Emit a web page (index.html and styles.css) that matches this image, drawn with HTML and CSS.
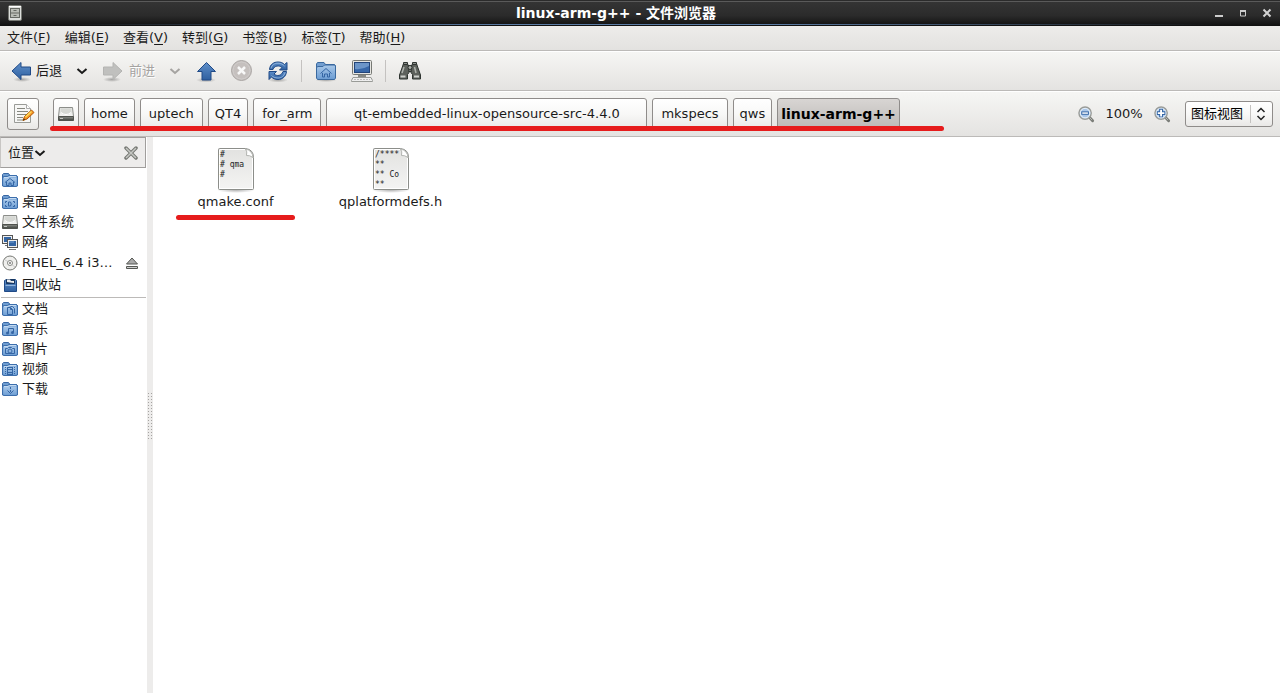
FILE: index.html
```html
<!DOCTYPE html>
<html lang="zh-CN">
<head>
<meta charset="utf-8">
<title>linux-arm-g++ - 文件浏览器</title>
<link rel="stylesheet" href="styles.css">
</head>
<body>
<svg class="defs" aria-hidden="true">
  <defs>
    <linearGradient id="blue" x1="0" y1="0" x2="0" y2="1"><stop offset="0" stop-color="#5f8fc9"/><stop offset="1" stop-color="#2f60a0"/></linearGradient>
    <linearGradient id="fold" x1="0" y1="0" x2="0" y2="1"><stop offset="0" stop-color="#a9c8e9"/><stop offset="1" stop-color="#6b9cd3"/></linearGradient>
    <linearGradient id="page" x1="0" y1="0" x2="0" y2="1"><stop offset="0" stop-color="#e2e2e0"/><stop offset="1" stop-color="#f4f4f3"/></linearGradient>
    <linearGradient id="metal" x1="0" y1="0" x2="0" y2="1"><stop offset="0" stop-color="#e0e1de"/><stop offset="1" stop-color="#f4f4f2"/></linearGradient>
    <linearGradient id="base" x1="0" y1="0" x2="0" y2="1"><stop offset="0" stop-color="#8d908b"/><stop offset="1" stop-color="#3d413c"/></linearGradient>
    <radialGradient id="shade"><stop offset="0" stop-color="#000" stop-opacity=".3"/><stop offset="1" stop-color="#000" stop-opacity="0"/></radialGradient>
    <symbol id="folder" viewBox="0 0 16 16">
      <path d="M.5 14V2.500l1-1h5l1.500 2h6.500l1 1V14z" fill="#6f9dd0" stroke="#3867a4"/>
      <path d="M1.500 5.500h13v9h-13z" fill="url(#fold)"/>
      <path d="M.5 6l1-1.500h4l1.500-1h7.500l1 1v9l-1 1h-13l-1-1z" fill="none" stroke="#3c6eac"/>
      <path d="M2 5.500h4l1.500-1H14" fill="none" stroke="#c5dbf2"/>
    </symbol>
    <symbol id="drive" viewBox="0 0 16 16">
      <path d="M1.500 1.500h13l1 9H.5z" fill="url(#metal)" stroke="#8b8d89"/>
      <path d="M3 2.500h10l.5 4q-5.500 5-11 0z" fill="#d5d7d3"/>
      <path d="M3 6.500q5 4 10 0" fill="none" stroke="#fff"/>
      <path d="M.5 10.500h15v4H.5z" fill="url(#base)" stroke="#50534e"/>
      <path d="M2 12.500h3" stroke="#c5c7c3"/>
    </symbol>
    <symbol id="chev" viewBox="0 0 12 12"><path d="M1.500 4L6 8l4.500-4" fill="none" stroke="currentColor" stroke-width="2"/></symbol>
    <symbol id="arrow" viewBox="0 0 24 24">
      <ellipse cx="14" cy="20.500" rx="9" ry="2.500" fill="url(#shade)" stroke="none"/>
      <path d="M4 12l9-8.500v4.500h9.500v8H13v4.500z"/>
    </symbol>
    <symbol id="lens" viewBox="0 0 18 18">
      <path d="M11.500 11.500l4 4" stroke="#777a75" stroke-width="3" stroke-linecap="round"/>
      <path d="M12 12l3 3" stroke="#b9bbb7" stroke-width="1"/>
      <circle cx="7.500" cy="7.500" r="6.500" fill="#c8dbf0" stroke="#9a9c98" stroke-width="1.500"/>
      <circle cx="7.500" cy="7.500" r="5" fill="#a9c6e8" stroke="#e8f0f9"/>
    </symbol>
    <symbol id="sheet" viewBox="0 0 40 46">
      <ellipse cx="20" cy="43" rx="19" ry="3" fill="url(#shade)"/>
      <path d="M3.500 1.500h26q8 1 8 9v31q0 1-1 1h-33q-1 0-1-1v-39q0-1 1-1z" fill="url(#page)" stroke="#8c8e8a"/>
      <path d="M4 2.500h25M3.500 3v38.500h33V11" fill="none" stroke="#fff"/>
      <path d="M29.500 2q2 2.500 1 6.500 3-.5 6.500 2-.5-7-7.500-8.500z" fill="#fff" stroke="#b2b4b0"/>
    </symbol>
  </defs>
</svg>

<div class="window">
  <header class="titlebar">
    <svg class="app" width="20" height="20" viewBox="0 0 20 20"><rect x="3.500" y="2.500" width="13" height="15" rx="1.500" fill="#dcdedb" stroke="#777974"/><path d="M4 3.500h12" stroke="#fff"/><rect x="5.500" y="5.500" width="9" height="9" fill="#babdb6" stroke="#666963"/><path d="M5.500 10h9M8.500 7.500h3M8.500 12.500h3" stroke="#666963"/></svg>
    <h1>linux-arm-g++ - 文件浏览器</h1>
    <button class="wm" aria-label="最小化"><svg width="12" height="12"><path d="M2 9h8" stroke="#ccc" stroke-width="2"/></svg></button>
    <button class="wm" aria-label="最大化"><svg width="12" height="12"><path d="M3.500 4v5h5V4" fill="none" stroke="#ccc"/><path d="M3 4h6" stroke="#ccc" stroke-width="2"/></svg></button>
    <button class="wm" aria-label="关闭"><svg width="12" height="12"><path d="M2.500 2.500l7 7M9.500 2.500l-7 7" stroke="#d2d2d2" stroke-width="2"/></svg></button>
  </header>

  <nav class="menubar">
    <button>文件(<u>F</u>)</button><button>编辑(<u>E</u>)</button><button>查看(<u>V</u>)</button><button>转到(<u>G</u>)</button><button>书签(<u>B</u>)</button><button>标签(<u>T</u>)</button><button>帮助(<u>H</u>)</button>
  </nav>

  <div class="toolbar">
    <button class="tool"><svg width="24" height="24" fill="url(#blue)" stroke="#204a87"><use href="#arrow"/></svg>后退</button>
    <button class="drop" aria-label="后退历史"><svg width="12" height="12"><use href="#chev"/></svg></button>
    <button class="tool" disabled><svg width="24" height="24" viewBox="0 0 24 24"><g transform="matrix(-1 0 0 1 25 0)" fill="#c0c0be" stroke="#b4b4b2"><use href="#arrow" width="24" height="24"/></g></svg>前进</button>
    <button class="drop" disabled aria-label="前进历史"><svg width="12" height="12"><use href="#chev"/></svg></button>
    <button class="tool" aria-label="向上"><svg width="24" height="24"><ellipse cx="12" cy="21" rx="10" ry="2.500" fill="url(#shade)"/><path d="M12.500 3.500l9 9h-4.500v8.500H8v-8.500H3.500z" fill="url(#blue)" stroke="#204a87"/></svg></button>
    <button class="tool" disabled aria-label="停止"><svg width="24" height="24"><circle cx="11.500" cy="11.500" r="10" fill="#c5c0be" stroke="#aaa6a4"/><circle cx="11.500" cy="11.500" r="8.500" fill="none" stroke="#d0cccb"/><path d="M8 8l7 7M15 8l-7 7" stroke="#f8f8f8" stroke-width="2.500"/></svg></button>
    <button class="tool" aria-label="重新载入"><svg width="24" height="24"><ellipse cx="12" cy="21" rx="10" ry="2.500" fill="url(#shade)"/><g fill="url(#blue)" stroke="#204a87" stroke-linejoin="round"><path d="M3.500 10.500C4 5 8 3 12 3c3 0 5 1 6.500 2.500L21 3.500V11h-7.500l2.500-2.500C13 6 8.500 6.500 7 10.500z"/><path d="M20.500 12.500c-.5 5.500-4.500 8-8.500 8-3 0-5-1-6.500-2.500L3 20.500V12.500h7.500L8 15c3 2.500 7.500 2 9-2.500z"/></g><path d="M5 9.500C6 5.500 9 4.200 12 4.200c3 0 5 1.300 6.500 2.800M19 13.500c-1 4-4 5.500-7 5.500-3 0-5-1-6.500-2.500" fill="none" stroke="#8fb3dc"/></svg></button>
    <i class="sep"></i>
    <button class="tool" aria-label="主文件夹"><svg width="24" height="24"><ellipse cx="12" cy="21" rx="11" ry="2" fill="url(#shade)"/><path d="M2.500 18V5l1-1.500h6.500l1.500 2h9l1 1.500v11z" fill="#739fd1" stroke="#3a699f"/><path d="M2.500 9l1-1.500H9l1.500-1.500h10l1 1v12l-1 1.500h-17l-1-1.500z" fill="url(#fold)" stroke="#3a699f"/><path d="M6.500 14.500L12 9.500l5.500 5M8.500 14v4h2v-3h3v3h2v-4" fill="none" stroke="#3465a4"/></svg></button>
    <button class="tool" aria-label="计算机"><svg width="24" height="24"><rect x="2.500" y="1.500" width="19" height="14" rx="1" fill="#e6e6e2" stroke="#777974"/><rect x="4.500" y="3.500" width="15" height="10" fill="#3767a8" stroke="#23457a"/><path d="M5 4h14v3q-7 4-14 3z" fill="#6b95c8"/><path d="M8 16h8v2H8z" fill="#888a85"/><path d="M3 18.500h18l1.500 3v1h-21v-1z" fill="#eee" stroke="#999b97"/><path d="M4 20.500h16" stroke="#bbb" stroke-dasharray="2 1"/></svg></button>
    <i class="sep"></i>
    <button class="tool" aria-label="搜索"><svg width="24" height="24" stroke="#2e3430"><path d="M10 6.500h4v6h-4z" fill="#8b8f8a"/><path d="M5.500 4.500h4l1 3 .5 6-1.500 2v4.500H1.500v-4L4 9z" fill="#5d615c"/><path d="M18.500 4.500h-4l-1 3-.5 6 1.500 2v4.500h8v-4L20 9z" fill="#5d615c"/><path d="M5.500 3.500h4v2h-4zM14.500 3.500h4v2h-4z" fill="#8b8f8a"/><path d="M6 8l-2 6M16.500 8l1.500 6" stroke="#aeb2ac" stroke-width="1.500"/><path d="M2.500 17.500h5M16 17.500h5" stroke="#cdd0cb" stroke-width="2"/><circle cx="12" cy="8.500" r="2" fill="#aaaea9"/></svg></button>
  </div>

  <div class="locationbar">
    <button class="edit" aria-label="编辑位置"><svg width="24" height="24"><path d="M3.500 2.500h12l4 4v14h-16z" fill="#f7f7f6" stroke="#999b97"/><path d="M15.500 2.500v4h4" fill="#fff" stroke="#aaa"/><path d="M6 6.500h8M6 9.500h11M6 12.500h10M6 15.500h6M6 18h7" stroke="#85877f"/><path d="M12 18.500l1.500-4 7-6.500 2.500 2.500-7 6.500z" fill="#f5932a" stroke="#b35a00"/><path d="M14.500 15l6-5.500" stroke="#fde05a" stroke-width="1.500"/><path d="M12 18.500l1-2 1 1z" fill="#222"/></svg></button>
    <nav class="path">
      <button class="disk" aria-label="文件系统"><svg width="16" height="16"><use href="#drive"/></svg></button>
      <button>home</button><button class="roomy">uptech</button><button>QT4</button><button class="roomy">for_arm</button><button class="long">qt-embedded-linux-opensource-src-4.4.0</button><button class="roomy">mkspecs</button><button>qws</button><button class="current">linux-arm-g++</button>
      <i class="mark"></i>
    </nav>
    <button class="zoom" aria-label="缩小"><svg width="17" height="17" viewBox="0 0 18 18"><use href="#lens"/><path d="M3.500 7.500h8" stroke="#3465a4" stroke-width="3.500"/><path d="M4.500 7.500h6" stroke="#fff" stroke-width="1.500"/></svg></button>
    <output>100%</output>
    <button class="zoom" aria-label="放大"><svg width="17" height="17" viewBox="0 0 18 18"><use href="#lens"/><path d="M3 7.500h9M7.500 3v9" stroke="#3465a4" stroke-width="4"/><path d="M4 7.500h7M7.500 4v7" stroke="#fff" stroke-width="2"/></svg></button>
    <div class="combo">
      <select aria-label="视图"><option>图标视图</option></select>
      <svg width="10" height="14"><path d="M1.500 5L5 1.500 8.500 5M1.500 9L5 12.500 8.500 9" fill="none" stroke="#222" stroke-width="1.500"/></svg>
    </div>
  </div>

  <div class="body">
    <aside class="sidebar">
      <div class="sidehead">
        <button>位置<svg width="12" height="12"><use href="#chev"/></svg></button>
        <button aria-label="关闭侧边栏"><svg width="14" height="14"><path d="M2 2l10 10M12 2L2 12" stroke="#757772" stroke-width="3.500" stroke-linecap="round"/><path d="M2 2l10 10M12 2L2 12" stroke="#c5c7c2" stroke-width="1.500"/></svg></button>
      </div>
      <ul>
        <li class="tall"><svg width="16" height="16"><use href="#folder"/><path d="M3 10.500l5-4 5 4M4.500 10v3.500h2.500V11h2v2.500h2.500V10" fill="none" stroke="#3465a4"/></svg>root</li>
        <li class="mid"><svg width="16" height="16"><use href="#folder"/><path d="M3.500 9V7.500H5M11 7.500h1.500V9M3.500 11v1.500H5M11 12.500h1.500V11M6.500 8h2q1.500 2 0 4h-2z" fill="none" stroke="#3465a4"/></svg>桌面</li>
        <li><svg width="16" height="16"><use href="#drive"/></svg>文件系统</li>
        <li><svg width="16" height="16"><rect x=".5" y="1.500" width="10" height="8" fill="#eee" stroke="#555"/><path d="M2 3h7v5H2z" fill="#3465a4"/><path d="M3 11.500h4" stroke="#777"/><rect x="5.500" y="5.500" width="10" height="8" fill="#eee" stroke="#555"/><path d="M7 7h7v5H7z" fill="#3465a4"/><path d="M7 8h5" stroke="#729fcf"/><path d="M7 15.500h7" stroke="#777"/></svg>网络</li>
        <li class="tall"><svg width="16" height="16"><circle cx="8" cy="8" r="7" fill="#efefed" stroke="#777974"/><path d="M3 5l4 2M9 9l4 3" stroke="#ccc"/><circle cx="8" cy="8" r="2.500" fill="#fff" stroke="#888a85"/><circle cx="8" cy="8" r="1" fill="#777"/></svg>RHEL_6.4 i3…<button class="eject" aria-label="弹出"><svg width="14" height="14"><path d="M7 2l5.500 6h-11z" fill="#aaa" stroke="#555753"/><path d="M1.500 10.500h11v2h-11z" fill="#ccc" stroke="#555753"/></svg></button></li>
        <li class="mid"><svg width="16" height="16"><path d="M2.500 3.500l2-1h9l1 1v11h-12z" fill="url(#blue)" stroke="#204a87"/><path d="M4.500 2.500h8v4h-8z" fill="#23426c" stroke="#173660"/><path d="M5 5V2.500h3l1 1.500h3v2" fill="#eee"/><path d="M3.500 8.500h10" stroke="#92b5dd"/></svg>回收站</li>
      </ul>
      <hr>
      <ul>
        <li><svg width="16" height="16"><use href="#folder"/><path d="M5.500 6.500h3l2 2v5h-5zM8.500 6.500v2h2M8.500 5.500h2l2 2v5" fill="none" stroke="#3465a4"/></svg>文档</li>
        <li><svg width="16" height="16"><use href="#folder"/><path d="M6.500 12V7.500h5V11" fill="none" stroke="#3465a4"/><circle cx="5.500" cy="12" r="1.500" fill="#3465a4"/><circle cx="10.500" cy="11.500" r="1.500" fill="#3465a4"/></svg>音乐</li>
        <li><svg width="16" height="16"><use href="#folder"/><path d="M3.500 7.500h2l1-1h3l1 1h2v5h-9z" fill="none" stroke="#3465a4"/><circle cx="8" cy="10" r="2" fill="#8fb5e0" stroke="#3465a4"/></svg>图片</li>
        <li><svg width="16" height="16"><use href="#folder"/><path d="M3.500 6v8M12.500 6v8" stroke="#3465a4" stroke-dasharray="1 1"/><path d="M5.500 6v8M10.500 6v8M6 6.500h4M6 8.500h4M6 11.500h4M6 13.500h4" fill="none" stroke="#3465a4"/></svg>视频</li>
        <li><svg width="16" height="16"><use href="#folder"/><path d="M8.500 6v2M8.500 9v2M5.500 9.500l3 3 3-3" fill="none" stroke="#3465a4"/></svg>下载</li>
      </ul>
    </aside>
    <div class="pane"></div>
    <main class="files">
      <figure class="marked">
        <svg width="40" height="46"><use href="#sheet"/><g class="mono"><text x="4" y="10">#</text><text x="4" y="20" xml:space="preserve"># qma</text><text x="4" y="30">#</text></g></svg>
        <figcaption>qmake.conf</figcaption>
      </figure>
      <figure>
        <svg width="40" height="46"><use href="#sheet"/><g class="mono"><text x="4" y="10">/****</text><text x="4" y="20">**</text><text x="4" y="30" xml:space="preserve">** Co</text><text x="4" y="40">**</text></g></svg>
        <figcaption>qplatformdefs.h</figcaption>
      </figure>
    </main>
  </div>
</div>
</body>
</html>
```
FILE: styles.css
```css
* { box-sizing: border-box; }
body {
  margin: 0;
  font: 13px/20px "DejaVu Sans", "Noto Sans CJK SC", sans-serif;
  color: #1a1a1a;
}
.defs { position: absolute; width: 0; height: 0; }
svg { display: block; flex: none; }
button {
  display: flex;
  align-items: center;
  justify-content: center;
  margin: 0;
  padding: 0;
  border: 0;
  background: none;
  font: inherit;
  color: inherit;
  white-space: nowrap;
}
.window { display: flex; flex-direction: column; min-height: 100vh; background: #fff; }

.titlebar {
  display: flex;
  align-items: center;
  height: 26px;
  padding: 0 1px 0 5px;
  background:
    linear-gradient(90deg, transparent 5%, #5b7ca5 40%, #5b7ca5 60%, transparent 95%) 0 24px / 100% 1px no-repeat,
    linear-gradient(#2b2b2b 0 1px, #5a5a5a 1px 2px, #343434 2px, #2b2b2b 60%, #101010);
}
.titlebar h1 { flex: 1; margin: 0; font-size: 14px; line-height: 20px; text-align: center; color: #fff; }
.wm { width: 24px; height: 24px; }

.menubar {
  display: flex;
  height: 25px;
  background: linear-gradient(#edecea, #e3e2e0);
  border-bottom: 1px solid #bcbab8;
}
.menubar button { padding: 0 7px; }
.menubar u { text-underline-offset: 2px; }

.toolbar {
  display: flex;
  align-items: center;
  gap: 12px;
  height: 40px;
  padding-left: 8px;
  background: linear-gradient(#f6f6f4, #e4e3e1);
  border-top: 1px solid #fff;
  border-bottom: 1px solid #bcbab8;
}
.tool { gap: 4px; }
.drop { width: 15px; height: 24px; }
.tool:disabled, .drop:disabled { color: #a5a3a1; text-shadow: 1px 1px #fff; }
.sep { width: 1px; height: 22px; margin-left: -1px; background: #c4c2c0; }

.locationbar {
  display: flex;
  align-items: center;
  height: 46px;
  padding: 0 7px;
  background: linear-gradient(#f6f6f4, #e4e3e1);
  border-top: 1px solid #fff;
  border-bottom: 1px solid #bcbab8;
}
.edit, .path button, .combo {
  border: 1px solid #8f8c8a;
  border-radius: 3px;
  background: linear-gradient(#fff, #f8f8f7 50%, #e9e8e6);
}
.edit { width: 32px; height: 32px; margin-right: 14px; }
.path { position: relative; display: flex; gap: 5px; margin-right: auto; }
.path button { height: 32px; padding: 0 6px; }
.path .disk { width: 26px; padding: 0; }
.path .roomy { padding: 0 8px; }
.path .long { width: 321px; }
.path .current { padding: 0 3px; font-size: 14px; font-weight: bold; color: #000; background: linear-gradient(#d8d5d3, #bcb9b6); }
.mark, .marked::after {
  content: "";
  position: absolute;
  height: 5px;
  border-radius: 3px;
  background: #e61c1c;
}
.mark { left: -3px; right: -44px; bottom: -1px; }
.zoom { width: 18px; }
output { width: 58px; text-align: center; }
.combo { position: relative; width: 88px; height: 26px; margin-left: 14px; }
.combo select {
  appearance: none;
  width: 100%;
  height: 24px;
  padding: 0 26px 0 5px;
  border: 0;
  background: linear-gradient(#c4c2c0, #c4c2c0) 64px 3px / 1px 18px no-repeat;
  font: inherit;
  color: #000;
}
.combo svg { position: absolute; right: 6px; top: 5px; pointer-events: none; }

.body { display: flex; flex: 1; }
.sidebar { width: 147px; padding-right: 1px; }
.sidehead {
  display: flex;
  justify-content: space-between;
  height: 31px;
  margin-bottom: 1px;
  padding: 0 7px;
  background: #edeceb;
  border: 1px solid #a09e9c;
  border-left-color: #c8c6c4;
}
.sidebar ul { margin: 0; padding: 0; list-style: none; }
.sidebar li { display: flex; align-items: center; gap: 4px; height: 20px; padding-left: 2px; white-space: nowrap; }
.sidebar .tall { height: 22px; }
.sidebar .mid { height: 21px; }
.sidebar hr { height: 1px; margin: 2px 0 1px 1px; border: 0; background: #bcbab8; }
.eject { margin: 0 7px 0 auto; }
.pane { width: 6px; padding-top: 255px; background: #edeceb; }
.pane::before {
  content: "";
  display: block;
  height: 48px;
  background:
    repeating-linear-gradient(#edeceb 0 1px, transparent 1px 2px, #edeceb 2px 3px),
    repeating-linear-gradient(90deg, #edeceb 0 1px, #a5a3a1 1px 2px, #edeceb 2px 3px);
}
.files { display: flex; flex: 1; flex-wrap: wrap; align-content: flex-start; padding: 10px 5px; }
.files figure { position: relative; display: flex; flex-direction: column; align-items: center; width: 155px; margin: 0; }
.files figcaption { margin-top: -1px; }
.marked::after { left: 18px; right: 18px; bottom: -8px; }
.mono { font: 8px "DejaVu Sans Mono", monospace; fill: #1a1a1a; }
```
